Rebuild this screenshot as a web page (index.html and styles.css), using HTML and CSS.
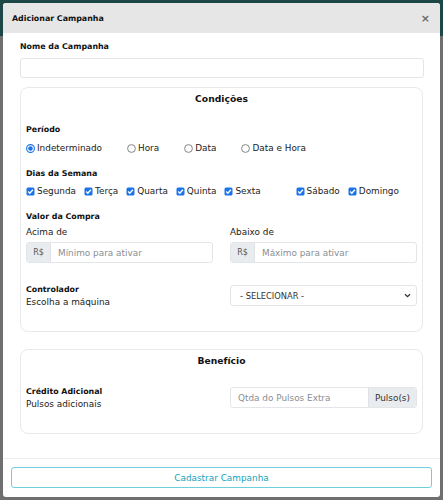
FILE: index.html
```html
<!DOCTYPE html>
<html lang="pt-BR">
<head>
<meta charset="utf-8">
<title>Adicionar Campanha</title>
<link rel="stylesheet" href="styles.css">
</head>
<body>
<div class="modal">
  <div class="modal-header">
    <span class="modal-title">Adicionar Campanha</span>
    <span class="close">×</span>
  </div>
  <div class="modal-body">
    <div class="label-bold">Nome da Campanha</div>
    <div class="field name-field"></div>

    <div class="card cond">
      <div class="card-title">Condições</div>

      <div class="label-bold periodo">Período</div>
      <div class="radio-row">
        <span class="opt"><svg class="mark" width="9" height="9" viewBox="0 0 9 9"><circle cx="4.5" cy="4.5" r="3.9" fill="#fff" stroke="#1a73e8" stroke-width="1.1"/><circle cx="4.5" cy="4.5" r="2.3" fill="#1a73e8"/></svg>Indeterminado</span>
        <span class="opt"><svg class="mark" width="9" height="9" viewBox="0 0 9 9"><circle cx="4.5" cy="4.5" r="3.9" fill="#fff" stroke="#777" stroke-width="0.9"/></svg>Hora</span>
        <span class="opt"><svg class="mark" width="9" height="9" viewBox="0 0 9 9"><circle cx="4.5" cy="4.5" r="3.9" fill="#fff" stroke="#777" stroke-width="0.9"/></svg>Data</span>
        <span class="opt"><svg class="mark" width="9" height="9" viewBox="0 0 9 9"><circle cx="4.5" cy="4.5" r="3.9" fill="#fff" stroke="#777" stroke-width="0.9"/></svg>Data e Hora</span>
      </div>

      <div class="label-bold dias">Dias da Semana</div>
      <div class="check-row">
        <span class="opt"><svg class="mark" width="9" height="9" viewBox="0 0 9 9"><rect x="0.5" y="0.5" width="8" height="8" rx="1.5" fill="#1a73e8"/><path d="M2.2 4.6 L3.8 6.2 L6.9 2.8" fill="none" stroke="#fff" stroke-width="1.4"/></svg>Segunda</span>
        <span class="opt"><svg class="mark" width="9" height="9" viewBox="0 0 9 9"><rect x="0.5" y="0.5" width="8" height="8" rx="1.5" fill="#1a73e8"/><path d="M2.2 4.6 L3.8 6.2 L6.9 2.8" fill="none" stroke="#fff" stroke-width="1.4"/></svg>Terça</span>
        <span class="opt"><svg class="mark" width="9" height="9" viewBox="0 0 9 9"><rect x="0.5" y="0.5" width="8" height="8" rx="1.5" fill="#1a73e8"/><path d="M2.2 4.6 L3.8 6.2 L6.9 2.8" fill="none" stroke="#fff" stroke-width="1.4"/></svg>Quarta</span>
        <span class="opt"><svg class="mark" width="9" height="9" viewBox="0 0 9 9"><rect x="0.5" y="0.5" width="8" height="8" rx="1.5" fill="#1a73e8"/><path d="M2.2 4.6 L3.8 6.2 L6.9 2.8" fill="none" stroke="#fff" stroke-width="1.4"/></svg>Quinta</span>
        <span class="opt"><svg class="mark" width="9" height="9" viewBox="0 0 9 9"><rect x="0.5" y="0.5" width="8" height="8" rx="1.5" fill="#1a73e8"/><path d="M2.2 4.6 L3.8 6.2 L6.9 2.8" fill="none" stroke="#fff" stroke-width="1.4"/></svg>Sexta</span>
        <span class="opt weekend"><svg class="mark" width="9" height="9" viewBox="0 0 9 9"><rect x="0.5" y="0.5" width="8" height="8" rx="1.5" fill="#1a73e8"/><path d="M2.2 4.6 L3.8 6.2 L6.9 2.8" fill="none" stroke="#fff" stroke-width="1.4"/></svg>Sábado</span>
        <span class="opt"><svg class="mark" width="9" height="9" viewBox="0 0 9 9"><rect x="0.5" y="0.5" width="8" height="8" rx="1.5" fill="#1a73e8"/><path d="M2.2 4.6 L3.8 6.2 L6.9 2.8" fill="none" stroke="#fff" stroke-width="1.4"/></svg>Domingo</span>
      </div>

      <div class="label-bold valor">Valor da Compra</div>
      <div class="two-col">
        <div class="col">
          <div class="sub">Acima de</div>
          <div class="group">
            <span class="addon rs">R$</span>
            <span class="group-input">Mínimo para ativar</span>
          </div>
        </div>
        <div class="col">
          <div class="sub">Abaixo de</div>
          <div class="group">
            <span class="addon rs">R$</span>
            <span class="group-input">Máximo para ativar</span>
          </div>
        </div>
      </div>

      <div class="two-col ctrl-row">
        <div class="col">
          <div class="label-bold">Controlador</div>
          <div class="sub">Escolha a máquina</div>
        </div>
        <div class="col">
          <div class="select">
            <span>- SELECIONAR -</span>
            <svg class="chev" width="7" height="5" viewBox="0 0 7 5"><path d="M1 1.2 L3.5 3.6 L6 1.2" fill="none" stroke="#333" stroke-width="1.3"/></svg>
          </div>
        </div>
      </div>
    </div>

    <div class="card bene">
      <div class="card-title">Benefício</div>
      <div class="two-col bene-row">
        <div class="col">
          <div class="label-bold">Crédito Adicional</div>
          <div class="sub">Pulsos adicionais</div>
        </div>
        <div class="col">
          <div class="group">
            <span class="group-input pl">Qtda do Pulsos Extra</span>
            <span class="addon pulso">Pulso(s)</span>
          </div>
        </div>
      </div>
    </div>
  </div>
  <div class="modal-footer">
    <div class="btn">Cadastrar Campanha</div>
  </div>
</div>
</body>
</html>
```

FILE: styles.css
```css
* { box-sizing: border-box; }
html, body { margin: 0; padding: 0; }
body {
  width: 443px;
  height: 500px;
  overflow: hidden;
  font-family: "DejaVu Sans", sans-serif;
  font-size: 8.9px;
  color: #212529;
  background: linear-gradient(#1d4746 0, #1d4746 36px, #6f6f6f 36px);
  padding: 3px 3px 0 3px;
}
.modal {
  width: 437px;
  height: 494px;
  background: #fff;
  border-radius: 3px;
  overflow: hidden;
  display: flex;
  flex-direction: column;
}
.modal-header {
  height: 30px;
  background: #e6e6e6;
  display: flex;
  align-items: center;
  justify-content: space-between;
  padding: 0 10px 0 9px;
}
.modal-title {
  font-weight: bold;
  font-size: 7.9px;
  color: #111;
}
.close {
  font-size: 11px;
  font-weight: bold;
  color: #6a6a6a;
  line-height: 1;
}
.modal-body {
  padding: 8px 17px 0 17px;
  flex: 1;
}
.label-bold {
  font-weight: bold;
  font-size: 7.9px;
  line-height: 12px;
  color: #111;
}
.field {
  width: 404px;
  height: 20px;
  margin-top: 5px;
  border: 1px solid #e3e5e8;
  border-radius: 3px;
  background: #fff;
}
.card {
  border: 1px solid #e8e9ea;
  border-radius: 8px;
  padding: 4px 5px 0 5px;
}
.cond {
  margin-top: 9px;
  height: 245px;
}
.bene {
  margin-top: 17px;
  height: 85px;
}
.card-title {
  text-align: center;
  font-weight: bold;
  font-size: 9.2px;
  line-height: 14px;
  color: #111;
}
.periodo { margin-top: 18px; }
.dias { margin-top: 14px; }
.valor { margin-top: 14px; }
.radio-row, .check-row {
  display: flex;
  align-items: center;
  height: 12px;
  line-height: 12px;
}
.radio-row { margin-top: 6px; gap: 25px; }
.check-row { margin-top: 5px; gap: 8px; }
.weekend { margin-left: 27px; }
.opt {
  display: flex;
  align-items: center;
  white-space: nowrap;
  color: #222;
}
.mark {
  display: block;
  flex: none;
  margin-right: 2px;
}
.two-col {
  display: grid;
  grid-template-columns: 187px 187px;
  column-gap: 17px;
}
.sub {
  line-height: 12px;
  color: #222;
}
.two-col .col > .sub:first-child {
  margin-top: 3px;
}
.group {
  display: flex;
  height: 21px;
  margin-top: 4px;
  border: 1px solid #e3e5e8;
  border-radius: 3px;
  overflow: hidden;
}
.addon {
  background: #e9ecef;
  color: #555;
  display: flex;
  align-items: center;
  justify-content: center;
}
.rs {
  width: 24px;
  border-right: 1px solid #e0e2e5;
  font-size: 8px;
}
.pulso {
  width: 48px;
  border-left: 1px solid #dfe1e4;
  color: #333;
}
.group-input {
  flex: 1;
  display: flex;
  align-items: center;
  padding-left: 7px;
  color: #8a8e93;
}
.ctrl-row { margin-top: 21px; }
.select {
  margin-top: 1px;
  height: 21px;
  border: 1px solid #e3e5e8;
  border-radius: 3px;
  display: flex;
  align-items: center;
  justify-content: space-between;
  padding: 0 5px 0 9px;
  color: #333;
  font-size: 8.3px;
}
.bene-row { margin-top: 18px; }
.bene-row .group { margin-top: 1px; }
.modal-footer {
  border-top: 1px solid #ececec;
  padding: 8px 8px 9px 8px;
}
.btn {
  width: 421px;
  height: 21px;
  border: 1.5px solid #6fd0dc;
  border-radius: 3px;
  background: #fff;
  color: #17a2b8;
  font-size: 8.9px;
  display: flex;
  align-items: center;
  justify-content: center;
}
```
